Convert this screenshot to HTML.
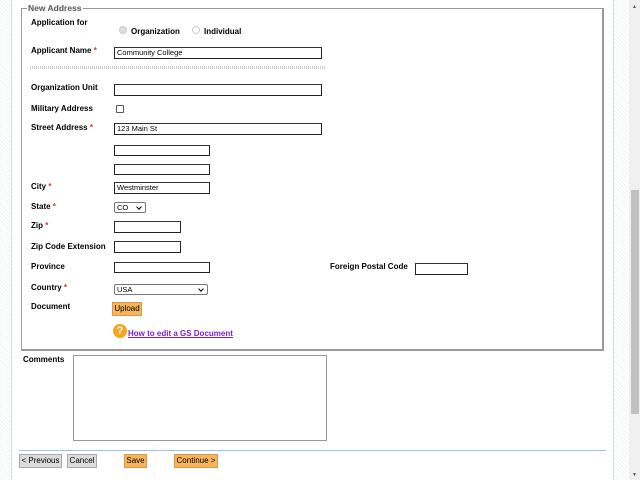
<!DOCTYPE html>
<html><head><style>
*{margin:0;padding:0;box-sizing:border-box}
body{width:640px;height:480px;overflow:hidden;background:#fff;font-family:"Liberation Sans","DejaVu Sans",sans-serif;font-size:8px;position:relative}
.hatch{position:absolute;top:0;height:480px;background:repeating-linear-gradient(45deg,#f4f4f4 0 1px,#fff 1px 3px)}
.a{position:absolute}
.l{position:absolute;font-weight:bold;color:#000;font-size:8px;white-space:nowrap}
.r{color:#d33}
.in{position:absolute;border:1px solid #222;border-top-color:#333;background:#fff;font-size:7.5px;padding-left:2px;line-height:9px}
.btn{position:absolute;height:14px;font-size:8px;line-height:12px;text-align:center;border:1px solid #aaa}
.o{background:#f7b45c;border-color:#d99a45}
.g{background:#dcdcdc;border-color:#aaa}
.sel{position:absolute;border:1px solid #777;border-radius:2px;background:#fff;font-size:7.5px;padding-left:2px;line-height:9px}
.sel:after{content:"";position:absolute;right:4px;top:2px;width:3px;height:3px;border-right:1px solid #000;border-bottom:1px solid #000;transform:rotate(45deg)}
</style></head><body>
<div class="hatch" style="left:0;width:11px"></div>
<div class="a" style="left:11px;top:0;width:1px;height:480px;background:#cfdcef"></div>
<div class="a" style="left:613px;top:0;width:1px;height:480px;background:#cfdcef"></div>
<div class="hatch" style="left:614px;width:15px"></div>
<div class="a" style="left:629px;top:0;width:11px;height:480px;background:#f0f0f0"></div>
<div class="a" style="left:631px;top:190px;width:8px;height:224px;background:#c1c1c1"></div>
<div class="a" style="left:632px;top:4px;font-size:5px;color:#555">▲</div>
<div class="a" style="left:632px;top:472px;font-size:5px;color:#555">▼</div>

<div class="a" style="left:21px;top:8px;width:583px;height:343px;border:1px solid #888;border-right-width:2px;border-bottom-width:2px;border-color:#999"></div>
<div class="a" style="left:27px;top:3px;background:#fff;padding:0 1px;font-weight:bold;color:#555;font-size:8.5px">New Address</div>

<div class="l" style="left:31px;top:18px">Application for</div>
<div class="a" style="left:119px;top:26px;width:8px;height:8px;border-radius:50%;background:#ddd;border:1px solid #ccc"></div>
<div class="l" style="left:131px;top:27px">Organization</div>
<div class="a" style="left:192px;top:26px;width:8px;height:8px;border-radius:50%;border:1px solid #ccc"></div>
<div class="l" style="left:204px;top:27px">Individual</div>

<div class="l" style="left:31px;top:46px">Applicant Name <span class="r">*</span></div>
<div class="in" style="left:114px;top:47px;width:208px;height:12px">Community College</div>
<div class="a" style="left:30px;top:66px;width:296px;height:3px;background:repeating-linear-gradient(90deg,#ccc 0 1px,#fff 1px 2px)"></div>

<div class="l" style="left:31px;top:83px">Organization Unit</div>
<div class="in" style="left:114px;top:84px;width:208px;height:12px"></div>
<div class="l" style="left:31px;top:104px">Military Address</div>
<div class="a" style="left:116px;top:105px;width:8px;height:8px;border:1px solid #555;border-radius:1px"></div>
<div class="l" style="left:31px;top:123px">Street Address <span class="r">*</span></div>
<div class="in" style="left:114px;top:123px;width:208px;height:12px">123 Main St</div>
<div class="in" style="left:114px;top:145px;width:96px;height:11px"></div>
<div class="in" style="left:114px;top:164px;width:96px;height:11px"></div>
<div class="l" style="left:31px;top:182px">City <span class="r">*</span></div>
<div class="in" style="left:114px;top:182px;width:96px;height:12px">Westminster</div>
<div class="l" style="left:31px;top:202px">State <span class="r">*</span></div>
<div class="sel" style="left:114px;top:202px;width:32px;height:11px">CO</div>
<div class="l" style="left:31px;top:221px">Zip <span class="r">*</span></div>
<div class="in" style="left:114px;top:221px;width:67px;height:12px"></div>
<div class="l" style="left:31px;top:242px">Zip Code Extension</div>
<div class="in" style="left:114px;top:241px;width:67px;height:12px"></div>
<div class="l" style="left:31px;top:262px">Province</div>
<div class="in" style="left:114px;top:262px;width:96px;height:11px"></div>
<div class="l" style="left:330px;top:262px">Foreign Postal Code</div>
<div class="in" style="left:415px;top:263px;width:53px;height:12px"></div>
<div class="l" style="left:31px;top:283px">Country <span class="r">*</span></div>
<div class="sel" style="left:114px;top:284px;width:94px;height:11px">USA</div>
<div class="l" style="left:31px;top:302px">Document</div>
<div class="btn o" style="left:112px;top:302px;width:30px">Upload</div>
<div class="a" style="left:113px;top:324px;width:14px;height:14px;border-radius:50%;background:#f5a623;color:#fff;font-weight:bold;font-size:11px;line-height:14px;text-align:center">?</div>
<div class="a" style="left:128px;top:329px;font-weight:bold;color:#7a1fd6;text-decoration:underline">How to edit a GS Document</div>

<div class="l" style="left:23px;top:355px">Comments</div>
<div class="a" style="left:73px;top:355px;width:254px;height:86px;border:1px solid #999"></div>
<div class="a" style="left:19px;top:450px;width:587px;height:1px;background:#9cc3ee"></div>
<div class="btn g" style="left:19px;top:454px;width:43px">&lt; Previous</div>
<div class="btn g" style="left:67px;top:454px;width:30px">Cancel</div>
<div class="btn o" style="left:124px;top:454px;width:23px">Save</div>
<div class="btn o" style="left:174px;top:454px;width:44px">Continue &gt;</div>
</body></html>
